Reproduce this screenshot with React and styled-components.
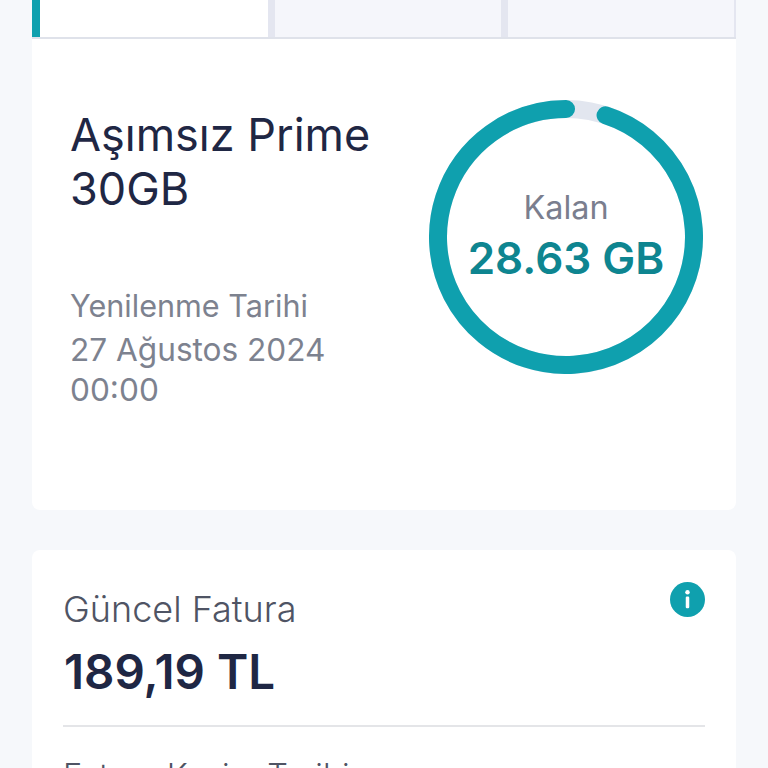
import styled, { createGlobalStyle } from "styled-components";

const GlobalStyle = createGlobalStyle`
  html, body {
    margin: 0;
    height: 768px;
    overflow: hidden;
    background: #f6f8fb;
  }
  * {
    box-sizing: border-box;
  }
`;

const Page = styled.div`
  width: 768px;
  height: 768px;
  overflow: hidden;
  padding: 0 32px;
  font-family: "Inter", "Open Sans", sans-serif;
  color: #1f2744;
`;

const Tabs = styled.div`
  height: 39px;
  display: flex;
  border-bottom: 2px solid #dfe2ea;
`;

const Tab = styled.div`
  flex: ${(p) => (p.$active ? "0 0 236px" : "1")};
  background: ${(p) => (p.$active ? "#fff" : "#f5f6fb")};
  border-left: ${(p) => (p.$active ? "8px solid #0fa0ae" : "none")};
  & + & {
    border-left: 7px solid #e4e6f0;
  }
  &:last-child {
    border-right: 2px solid #e4e6f0;
  }
`;

const Card = styled.div`
  background: #fff;
  border-radius: 0 0 8px 8px;
`;

const PlanCard = styled(Card)`
  height: 471px;
  display: flex;
  justify-content: space-between;
  padding: 61px 33px 0 38px;
`;

const PlanInfo = styled.div`
  width: 320px;
`;

const PlanName = styled.h1`
  margin: 8px 0 0;
  font-size: 45px;
  line-height: 54px;
  font-weight: 400;
  color: #1f2744;
`;

const RenewLabel = styled.div`
  margin-top: 68px;
  font-size: 30.6px;
  line-height: 44px;
  color: #7d828f;
`;

const RenewDate = styled.div`
  font-size: 31.6px;
  line-height: 40px;
  margin-top: 2px;
  color: #7d828f;
`;

const Ring = styled.div`
  position: relative;
  width: 274px;
  height: 274px;
`;

const RingCenter = styled.div`
  position: absolute;
  inset: 0;
  display: flex;
  flex-direction: column;
  align-items: center;
  justify-content: center;
  gap: 2px;
  padding-bottom: 4px;
`;

const RingLabel = styled.div`
  font-size: 32.4px;
  line-height: 44px;
  color: #7a7e8e;
`;

const RingValue = styled.div`
  font-size: 44px;
  line-height: 52px;
  font-weight: 600;
  color: #0e8590;
`;

const BillCard = styled(Card)`
  margin-top: 40px;
  border-radius: 8px 8px 0 0;
  padding: 37px 31px 0;
  height: 300px;
`;

const BillHead = styled.div`
  display: flex;
  justify-content: space-between;
  align-items: flex-start;
  height: 44px;
`;

const BillLabel = styled.div`
  font-size: 36px;
  line-height: 44px;
  font-weight: 300;
  color: #4f5464;
`;

const InfoIcon = styled.svg`
  width: 35px;
  height: 35px;
  margin-top: -5px;
`;

const BillAmount = styled.div`
  margin-top: 14px;
  padding-left: 1px;
  font-size: 47.5px;
  line-height: 54px;
  font-weight: 600;
  color: #1f2744;
`;

const Divider = styled.hr`
  margin: 26px 0 0;
  border: none;
  height: 2px;
  background: #e4e5e8;
`;

const BillRow = styled.div`
  margin-top: 27px;
  font-size: 32.5px;
  line-height: 44px;
  font-weight: 300;
  color: #4f5464;
`;

export default function App() {
  return (
    <Page>
      <GlobalStyle />
      <Tabs>
        <Tab $active />
        <Tab />
        <Tab />
      </Tabs>
      <PlanCard>
        <PlanInfo>
          <PlanName>Aşımsız Prime 30GB</PlanName>
          <RenewLabel>Yenilenme Tarihi</RenewLabel>
          <RenewDate>27 Ağustos 2024 00:00</RenewDate>
        </PlanInfo>
        <Ring>
          <svg width="274" height="274" viewBox="0 0 274 274">
            <circle cx="137" cy="137" r="128" fill="none" stroke="#e2e6ef" strokeWidth="18" />
            <circle
              cx="137"
              cy="137"
              r="128"
              fill="none"
              stroke="#0fa0ae"
              strokeWidth="18"
              strokeLinecap="round"
              pathLength="360"
              strokeDasharray="342 360"
              transform="rotate(-72 137 137)"
            />
          </svg>
          <RingCenter>
            <RingLabel>Kalan</RingLabel>
            <RingValue>28.63 GB</RingValue>
          </RingCenter>
        </Ring>
      </PlanCard>
      <BillCard>
        <BillHead>
          <BillLabel>Güncel Fatura</BillLabel>
          <InfoIcon viewBox="0 0 36 36">
            <circle cx="18" cy="18" r="18" fill="#0fa0ae" />
            <circle cx="18" cy="10.5" r="2.3" fill="#fff" />
            <rect x="16.2" y="15" width="3.6" height="12" rx="1.2" fill="#fff" />
          </InfoIcon>
        </BillHead>
        <BillAmount>189,19 TL</BillAmount>
        <Divider />
        <BillRow>Fatura Kesim Tarihi</BillRow>
      </BillCard>
    </Page>
  );
}
